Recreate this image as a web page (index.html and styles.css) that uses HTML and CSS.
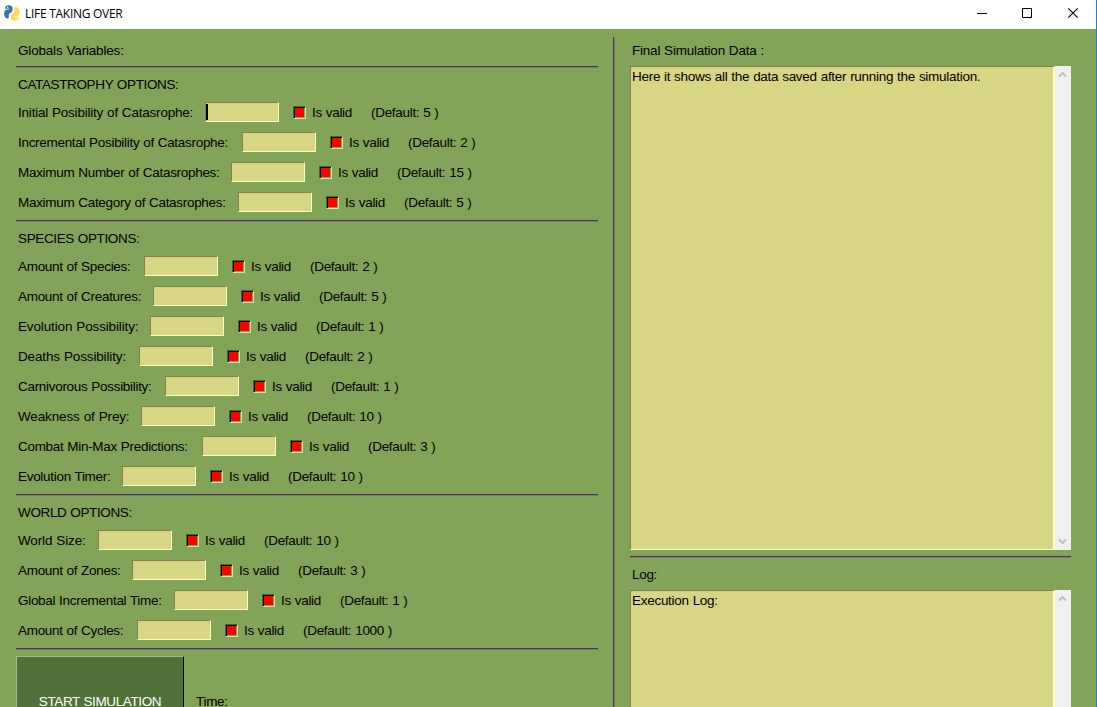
FILE: index.html
```
<!DOCTYPE html>
<html lang="en">
<head>
<meta charset="utf-8">
<title>LIFE TAKING OVER</title>
<link rel="stylesheet" href="styles.css">
</head>
<body>
<div class="window">
  <header class="titlebar">
    <svg class="logo" width="16" height="16" viewBox="0 0 16 16">
      <path fill="#3a75a6" d="M1.200 2C2 .6 3.400.2 5 .2c2.300 0 3.500 1 3.500 2.700v2.200c0 1.500-.7 2.100-1.800 2.700C5.300 8.500 4.800 9 4.800 10.200v1.700c0 1-.6 1.500-1.500 1.500C1.300 13.400.1 11.300.1 8.800c0-2.300.9-3.900 2.600-4.300h2.500v-.7H1.200z"/>
      <path fill="#ffd94f" d="M10 2.200h2.300c2.100 0 3.400 1.800 3.400 4.200 0 2.600-1.200 4.400-3.200 5h-2.300v.7h4.300v1.200c-.7 1.700-2.200 2.500-4 2.500-2.300 0-3.600-1-3.600-2.800v-2.200c0-1.500.8-2.300 2-2.900 1.200-.6 1.600-1.200 1.600-2.400V2.200z"/>
      <circle cx="3.700" cy="2.300" r=".7" fill="#fff"/><circle cx="12" cy="13.600" r=".7" fill="#fff"/>
    </svg>
    <span class="title">LIFE TAKING OVER</span>
    <svg class="controls" width="101" height="28" viewBox="0 0 101 28" fill="none" stroke="#000">
      <path d="M0 13.500h10M45.500 8.500h9v9h-9z"/><path stroke-width="1.100" d="M91.300 8.300l9.400 9.400M100.700 8.300l-9.400 9.400"/>
    </svg>
  </header>
  <main class="content">
    <section class="options">
      <div class="caption first">Globals Variables:</div>
      <div class="group catastrophe">
        <div class="caption heading">CATASTROPHY OPTIONS:</div>
        <div class="row"><span class="label">Initial Posibility of Catasrophe:</span><span class="field focused"></span><span class="check"></span><span class="valid">Is valid</span><span>(Default: 5 )</span></div>
        <div class="row"><span class="label">Incremental Posibility of Catasrophe:</span><span class="field"></span><span class="check"></span><span class="valid">Is valid</span><span>(Default: 2 )</span></div>
        <div class="row"><span class="label">Maximum Number of Catasrophes:</span><span class="field"></span><span class="check"></span><span class="valid">Is valid</span><span>(Default: 15 )</span></div>
        <div class="row"><span class="label">Maximum Category of Catasrophes:</span><span class="field"></span><span class="check"></span><span class="valid">Is valid</span><span>(Default: 5 )</span></div>
      </div>
      <div class="group species">
        <div class="caption heading">SPECIES OPTIONS:</div>
        <div class="row"><span class="label">Amount of Species:</span><span class="field"></span><span class="check"></span><span class="valid">Is valid</span><span>(Default: 2 )</span></div>
        <div class="row"><span class="label">Amount of Creatures:</span><span class="field"></span><span class="check"></span><span class="valid">Is valid</span><span>(Default: 5 )</span></div>
        <div class="row"><span class="label loose">Evolution Possibility:</span><span class="field"></span><span class="check"></span><span class="valid">Is valid</span><span>(Default: 1 )</span></div>
        <div class="row"><span class="label loose">Deaths Possibility:</span><span class="field"></span><span class="check"></span><span class="valid">Is valid</span><span>(Default: 2 )</span></div>
        <div class="row"><span class="label">Carnivorous Possibility:</span><span class="field"></span><span class="check"></span><span class="valid">Is valid</span><span>(Default: 1 )</span></div>
        <div class="row"><span class="label loose">Weakness of Prey:</span><span class="field"></span><span class="check"></span><span class="valid">Is valid</span><span>(Default: 10 )</span></div>
        <div class="row"><span class="label">Combat Min-Max Predictions:</span><span class="field"></span><span class="check"></span><span class="valid">Is valid</span><span>(Default: 3 )</span></div>
        <div class="row"><span class="label">Evolution Timer:</span><span class="field"></span><span class="check"></span><span class="valid">Is valid</span><span>(Default: 10 )</span></div>
      </div>
      <div class="group world">
        <div class="caption heading">WORLD OPTIONS:</div>
        <div class="row"><span class="label loose">World Size:</span><span class="field"></span><span class="check"></span><span class="valid">Is valid</span><span>(Default: 10 )</span></div>
        <div class="row"><span class="label">Amount of Zones:</span><span class="field"></span><span class="check"></span><span class="valid">Is valid</span><span>(Default: 3 )</span></div>
        <div class="row"><span class="label">Global Incremental Time:</span><span class="field"></span><span class="check"></span><span class="valid">Is valid</span><span>(Default: 1 )</span></div>
        <div class="row"><span class="label">Amount of Cycles:</span><span class="field"></span><span class="check"></span><span class="valid">Is valid</span><span>(Default: 1000 )</span></div>
      </div>
      <div class="actions">
        <div class="start">START SIMULATION</div>
        <span class="time">Time:</span>
      </div>
    </section>
    <section class="output">
      <div class="caption final">Final Simulation Data :</div>
      <div class="textbox data">
        <div class="text">Here it shows all the data saved after running the simulation.</div>
        <div class="scroll">
          <svg width="9" height="7" viewBox="0 0 9 7"><path d="M1 5.500l3.500-3.500L8 5.500" fill="none" stroke="#bfbfbf" stroke-width="2"/></svg>
          <svg width="9" height="7" viewBox="0 0 9 7"><path d="M1 1.500l3.500 3.500L8 1.500" fill="none" stroke="#bfbfbf" stroke-width="2"/></svg>
        </div>
      </div>
      <div class="caption log">Log:</div>
      <div class="textbox">
        <div class="text">Execution Log:</div>
        <div class="scroll">
          <svg width="9" height="7" viewBox="0 0 9 7"><path d="M1 5.500l3.500-3.500L8 5.500" fill="none" stroke="#bfbfbf" stroke-width="2"/></svg>
        </div>
      </div>
    </section>
  </main>
</div>
</body>
</html>
```
FILE: styles.css
```
* { box-sizing: border-box; }
body {
  margin: 0;
  overflow: hidden;
  font: 13.5px/16px "Liberation Sans", Arial, sans-serif;
  letter-spacing: -0.3px;
  word-spacing: 0.4px;
  color: #000;
}
.window {
  width: 1097px;
  height: 707px;
  overflow: hidden;
  border-right: 1px solid #1883d7;
  background: #82a459;
  display: flex;
  flex-direction: column;
}
.titlebar {
  height: 29px;
  flex: none;
  background: #fff;
  display: flex;
  align-items: flex-start;
  padding: 0 18px 0 4px;
}
.logo { margin-top: 5px; }
.title {
  margin: 6px auto 0 5px;
  font: 12px/16px "Open Sans", sans-serif;
  letter-spacing: -0.28px;
  word-spacing: 0;
  white-space: nowrap;
}
.content { flex: 1; min-height: 0; display: flex; padding-left: 16px; }
.options { width: 582px; flex: none; }
.caption { padding-left: 2px; white-space: nowrap; }
.first { height: 37px; padding-top: 14px; letter-spacing: -0.18px; }
.group {
  border-top: 1px solid #433b4b;
  box-shadow: inset 0 1px #817684;
  padding: 1px 0 3px;
}
.heading { height: 29px; padding-top: 9px; letter-spacing: -0.36px; }
.row {
  height: 30px;
  display: flex;
  align-items: center;
  padding-left: 2px;
  white-space: nowrap;
}
.row span { line-height: 18px; }
.row .label, .row .valid, .row .valid + span { padding-top: 1px; }
.label { flex: none; }
.row .loose { letter-spacing: -0.14px; }
.catastrophe .row:nth-child(2) .label { letter-spacing: -0.21px; }
.field {
  width: 74px;
  height: 20px;
  flex: none;
  background: #d8d584;
  border: 1px solid;
  border-color: #82804f #ffffc0 #ffffc0 #82804f;
}
.focused { padding-top: 1px; }
.focused::before {
  content: "";
  display: block;
  width: 2px;
  height: 16px;
  background: #000;
}
.check {
  width: 13px;
  height: 13px;
  flex: none;
  margin: 0 6px 0 14px;
  background: #f00;
  border: 1px solid;
  border-color: #4e6235 #c0ecac #c0ecac #4e6235;
  box-shadow: inset 1px 1px #000, inset -1px -1px #82a459;
}
.valid { width: 59px; flex: none; }

/* Label widths follow each field's caption. */
.catastrophe .row:nth-child(2) .label { width: 187px; }
.catastrophe .row:nth-child(3) .label { width: 224px; }
.catastrophe .row:nth-child(4) .label { width: 213px; }
.catastrophe .row:nth-child(5) .label { width: 220px; }
.species .row:nth-child(2) .label { width: 126px; }
.species .row:nth-child(3) .label { width: 135px; }
.species .row:nth-child(4) .label { width: 132px; }
.species .row:nth-child(5) .label { width: 121px; }
.species .row:nth-child(6) .label { width: 147px; }
.species .row:nth-child(7) .label { width: 123px; }
.species .row:nth-child(8) .label { width: 184px; }
.species .row:nth-child(9) .label { width: 104px; }
.world .row:nth-child(2) .label { width: 80px; }
.world .row:nth-child(3) .label { width: 114px; }
.world .row:nth-child(4) .label { width: 156px; }
.world .row:nth-child(5) .label { width: 119px; }

.actions {
  height: 59px;
  border-top: 1px solid #433b4b;
  box-shadow: inset 0 1px #817684;
  padding-top: 7px;
  display: flex;
}
.start {
  width: 168px;
  height: 51px;
  flex: none;
  border: 1px solid;
  border-color: #a4b899 #000 #507239 #a4b899;
  border-bottom: 0;
  background: #507239;
  color: #fff;
  text-align: center;
  padding-top: 38px;
  line-height: 13px;
  letter-spacing: -0.38px;
}
.time { margin: 39px 0 0 12px; line-height: 13px; }
.output {
  width: 458px;
  margin: 8px 0 0 15px;
  border-left: 1px solid #433b4b;
  box-shadow: inset 1px 0 #817684;
  padding-left: 16px;
}
.final { height: 29px; padding-top: 6px; letter-spacing: -0.22px; }
.textbox { height: 484px; display: flex; }
.text {
  flex: 1;
  background: #d8d584;
  border: 1px solid;
  border-color: #82804f #ffffc0 #ffffc0 #82804f;
  border-right-width: 2px;
  padding: 2px 0 0 1px;
  letter-spacing: -0.28px;
}
.scroll {
  width: 16px;
  background: #f0f0f0;
  display: flex;
  flex-direction: column;
  justify-content: space-between;
  padding: 5px 0 5px 3px;
}
.log {
  height: 34px;
  margin-top: 6px;
  border-top: 1px solid #433b4b;
  box-shadow: inset 0 1px #817684;
  padding-top: 10px;
}
```
